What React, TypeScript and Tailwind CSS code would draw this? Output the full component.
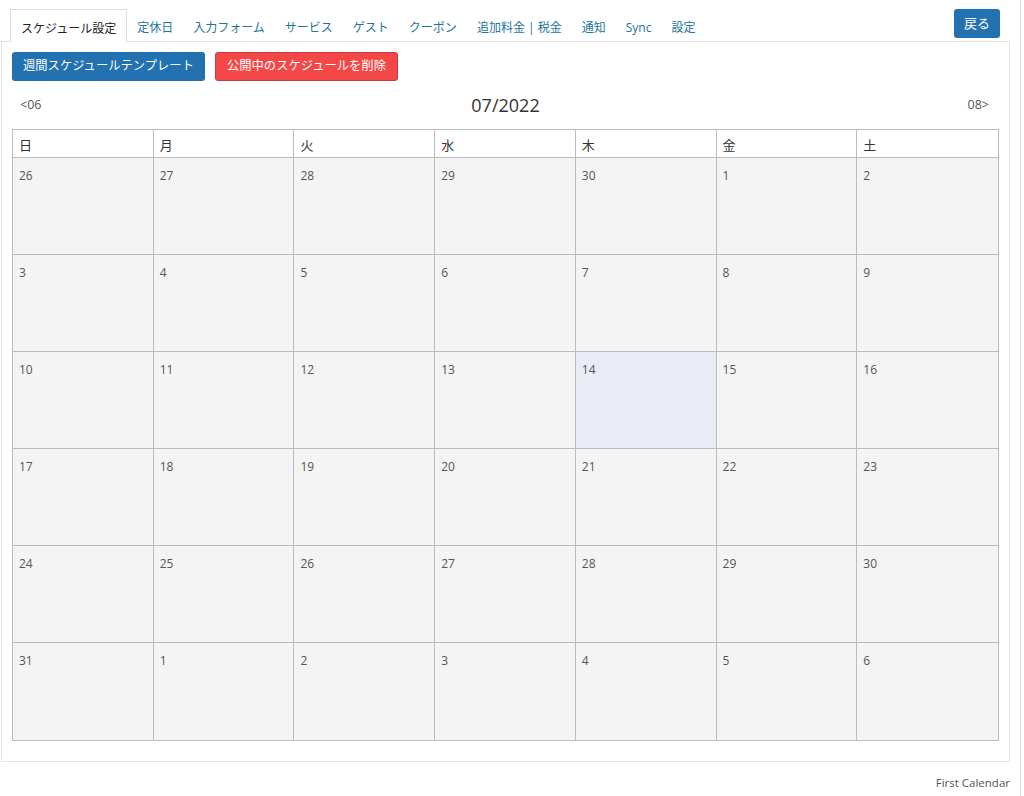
const tabs = ["スケジュール設定", "定休日", "入力フォーム", "サービス", "ゲスト", "クーポン", "追加料金 | 税金", "通知", "Sync", "設定"];
const weekdays = ["日", "月", "火", "水", "木", "金", "土"];
const weeks = [
  [26, 27, 28, 29, 30, 1, 2],
  [3, 4, 5, 6, 7, 8, 9],
  [10, 11, 12, 13, 14, 15, 16],
  [17, 18, 19, 20, 21, 22, 23],
  [24, 25, 26, 27, 28, 29, 30],
  [31, 1, 2, 3, 4, 5, 6],
];

export default function App() {
  return (
    <div
      className="flex min-h-[796px] bg-white text-[#333]"
      style={{ fontFamily: '"Open Sans", "Noto Sans CJK JP", sans-serif' }}
    >
      <div className="w-[1020px] pl-px pt-[9px]">
        {/* Tabs */}
        <div className="flex items-end justify-between pr-[20px]">
          <div className="flex items-end pl-[9px]">
            {tabs.map((t, i) =>
              i === 0 ? (
                <div
                  key={t}
                  className="relative -mb-px h-[33px] border border-b-0 border-[#dcdcdc] bg-white px-[10px] pt-[10px] text-[12px] text-[#222]"
                >
                  {t}
                </div>
              ) : (
                <div key={t} className="h-[32px] px-[10px] pt-[10px] text-[12px] text-[#21759b]">
                  {t}
                </div>
              ),
            )}
          </div>
          <button className="mb-[3px] h-[29px] w-[46px] rounded-[3px] bg-[#2271b1] text-[13px] text-white">
            戻る
          </button>
        </div>

        {/* Panel */}
        <div className="w-[1009px] border border-[#e3e3e3] bg-white px-[10px] pt-[10px] pb-[20px]">
          <div className="flex gap-[10px]">
            <button className="h-[29px] rounded-[3px] bg-[#2271b1] px-[11px] text-[12.3px] text-white">
              週間スケジュールテンプレート
            </button>
            <button className="h-[29px] rounded-[3px] border border-[#c93a3a] bg-[#f44848] px-[11px] text-[12.3px] text-white">
              公開中のスケジュールを削除
            </button>
          </div>

          <div className="relative flex h-[48px] items-center justify-between pl-[8px] pr-[10px] text-[12.5px] text-[#555]">
            <span>&lt;06</span>
            <span className="absolute left-1/2 -translate-x-1/2 text-[18px] text-[#333]">07/2022</span>
            <span>08&gt;</span>
          </div>

          <div className="border border-[#bbb]">
            <div className="grid grid-cols-7">
              {weekdays.map((d, i) => (
                <div
                  key={d}
                  className={`h-[28px] border-b border-[#bbb] bg-white pl-[6px] pt-[6px] text-[13px] text-[#333] ${
                    i < 6 ? "border-r" : ""
                  }`}
                >
                  {d}
                </div>
              ))}
            </div>
            {weeks.map((w, wi) => (
              <div key={wi} className="grid grid-cols-7">
                {w.map((d, di) => (
                  <div
                    key={di}
                    className={`h-[97px] border-[#bbb] pl-[6px] pt-[9px] text-[12px] text-[#555] ${
                      di < 6 ? "border-r" : ""
                    } ${wi < 5 ? "border-b" : ""} ${wi === 2 && di === 4 ? "bg-[#e9ecf4]" : "bg-[#f4f4f4]"}`}
                  >
                    {d}
                  </div>
                ))}
              </div>
            ))}
          </div>
        </div>

        <div className="pr-[10px] pt-[12px] text-right text-[11.5px] text-[#555]">First Calendar</div>
      </div>
      <div className="w-px bg-[#dcdcdc]" />
    </div>
  );
}
